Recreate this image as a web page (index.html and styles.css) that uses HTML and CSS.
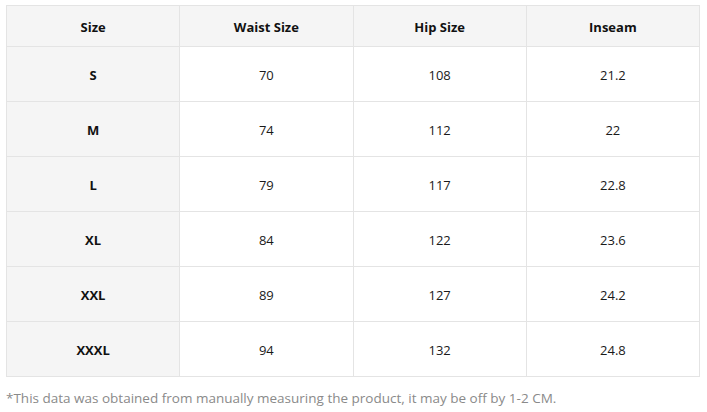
FILE: index.html
```html
<!DOCTYPE html>
<html>
<head>
<meta charset="utf-8">
<link rel="stylesheet" href="styles.css">
</head>
<body>
<div class="wrap">
<table class="size-table">
  <thead>
    <tr><th>Size</th><th>Waist Size</th><th>Hip Size</th><th>Inseam</th></tr>
  </thead>
  <tbody>
    <tr><th>S</th><td>70</td><td>108</td><td>21.2</td></tr>
    <tr><th>M</th><td>74</td><td>112</td><td>22</td></tr>
    <tr><th>L</th><td>79</td><td>117</td><td>22.8</td></tr>
    <tr><th>XL</th><td>84</td><td>122</td><td>23.6</td></tr>
    <tr><th>XXL</th><td>89</td><td>127</td><td>24.2</td></tr>
    <tr><th>XXXL</th><td>94</td><td>132</td><td>24.8</td></tr>
  </tbody>
</table>
<p class="note">*This data was obtained from manually measuring the product, it may be off by 1-2 CM.</p>
</div>
</body>
</html>
```
FILE: styles.css
```css
html, body {
  margin: 0;
  padding: 0;
  background: #ffffff;
}
.wrap {
  padding: 5px 0 0 6px;
  font-family: "Open Sans", "Noto Sans", sans-serif;
  color: #111;
}
.size-table {
  border-collapse: collapse;
  width: 694px;
  table-layout: fixed;
  font-size: 13px;
}
.size-table th, .size-table td {
  border: 1px solid #e4e4e4;
  text-align: center;
  padding: 1px 0 0 0;
}
.size-table thead th {
  height: 39px;
  background: #f5f5f5;
  font-weight: 700;
}
.size-table tbody th {
  background: #f5f5f5;
  font-weight: 700;
}
.size-table tbody td, .size-table tbody th {
  height: 53px;
}
.size-table tbody td {
  font-weight: 400;
  color: #1a1a1a;
}
.note {
  margin: 12px 0 0 0;
  font-size: 13.5px;
  color: #8a8a8a;
}
```
